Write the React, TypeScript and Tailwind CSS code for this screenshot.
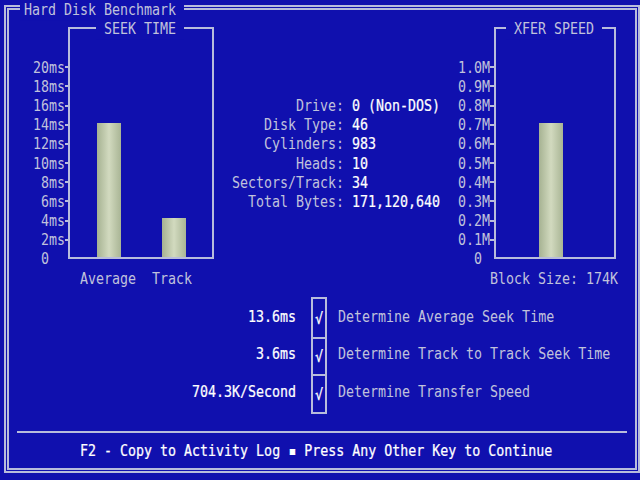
import React from 'react';

// Text-mode screen: 80 columns x 25 rows, 8px x 19.2px cells.
const LINE = 'border-[#b8bcdc]';
const BRIGHT = 'text-white [-webkit-text-stroke:0.2px_#ffffff]';

const seekTicks = ['20ms', '18ms', '16ms', '14ms', '12ms', '10ms', ' 8ms', ' 6ms', ' 4ms', ' 2ms'];
const xferTicks = ['1.0M', '0.9M', '0.8M', '0.7M', '0.6M', '0.5M', '0.4M', '0.3M', '0.2M', '0.1M'];

// pixels from the zero line up to the top tick
const AXIS_PX = 191;

const seekBars = [
  { label: 'Average', value: 14 },
  { label: 'Track', value: 4 },
];

const driveInfo = [
  ['Drive:', '0 (Non-DOS)'],
  ['Disk Type:', '46'],
  ['Cylinders:', '983'],
  ['Heads:', '10'],
  ['Sectors/Track:', '34'],
  ['Total Bytes:', '171,120,640'],
];

const results = [
  { value: '13.6ms', task: 'Determine Average Seek Time' },
  { value: '3.6ms', task: 'Determine Track to Track Seek Time' },
  { value: '704.3K/Second', task: 'Determine Transfer Speed' },
];

function Bar({ height }: { height: number }) {
  return (
    <div
      className="w-[24px] bg-gradient-to-r from-[#a6b292] via-[#d2dabf] to-[#a9b595]"
      style={{ height }}
    />
  );
}

function TickColumn({ ticks, zero }: { ticks: string[]; zero: string }) {
  return (
    <>
      {ticks.map((t) => (
        <div key={t} className="h-[19.2px] flex items-center justify-end">
          <span className="whitespace-pre scale-y-[1.15]">{t}</span>
          <span className="w-[5px] h-[2px] bg-[#b8bcdc]" />
        </div>
      ))}
      <div className="h-[19.2px] flex items-center justify-end">
        <span className="whitespace-pre scale-y-[1.15]">{zero}</span>
        <span className="w-[5px] h-[2px]" />
      </div>
    </>
  );
}

export default function App() {
  return (
    <div className="w-[640px] h-[480px] overflow-hidden bg-[#1010ae] text-[#c0c2dc] font-['DejaVu_Sans_Mono','Liberation_Mono',monospace] text-[13.3px] leading-[19.2px] grid grid-cols-[repeat(80,8px)] grid-rows-[repeat(25,19.2px)]">
      {/* outer double frame */}
      <div className={`col-start-1 col-span-80 row-start-1 row-span-25 ml-[4px] mt-[5px] mb-[7px] border-[5px] border-double ${LINE}`} />
      <div className="col-start-3 col-span-21 row-start-1 ml-[4px] pl-[4px] bg-[#1010ae] whitespace-pre scale-y-[1.15]">
        Hard Disk Benchmark
      </div>

      {/* seek time chart */}
      <div className="col-start-1 col-span-9 row-start-4 row-span-11 mr-[2px] flex flex-col">
        <TickColumn ticks={seekTicks} zero={' 0  '} />
      </div>
      <div className={`col-start-9 col-span-19 row-start-2 row-span-13 ml-[4px] mr-[2px] mt-[8px] mb-[10px] border-2 ${LINE} flex items-end pl-[27px] gap-[41px]`}>
        {seekBars.map((b) => (
          <Bar key={b.label} height={(b.value / 20) * AXIS_PX} />
        ))}
      </div>
      <div className="col-start-13 col-span-11 row-start-2 bg-[#1010ae] text-center scale-y-[1.15]">SEEK TIME</div>
      <div className="col-start-11 col-span-7 row-start-15 scale-y-[1.15]">Average</div>
      <div className="col-start-20 col-span-5 row-start-15 scale-y-[1.15]">Track</div>

      {/* drive parameters */}
      <div className="col-start-28 col-span-30 row-start-6 row-span-6 grid grid-cols-[128px_1fr] gap-x-[8px] auto-rows-[19.2px]">
        {driveInfo.map(([k, v]) => (
          <React.Fragment key={k}>
            <div className="text-right whitespace-pre scale-y-[1.15]">{k}</div>
            <div className={`whitespace-pre scale-y-[1.15] ${BRIGHT}`}>{v}</div>
          </React.Fragment>
        ))}
      </div>

      {/* transfer speed chart */}
      <div className="col-start-56 col-span-7 row-start-4 row-span-11 mr-[1px] flex flex-col">
        <TickColumn ticks={xferTicks} zero={'  0 '} />
      </div>
      <div className={`col-start-62 col-span-16 row-start-2 row-span-13 ml-[6px] mt-[8px] mb-[10px] border-2 ${LINE} flex items-end pl-[43px]`}>
        <Bar height={0.7 * AXIS_PX} />
      </div>
      <div className="col-start-64 col-span-12 row-start-2 bg-[#1010ae] text-center translate-x-[2px] scale-y-[1.15]">XFER SPEED</div>
      <div className="col-start-62 col-span-17 row-start-15 ml-[2px] whitespace-pre scale-y-[1.15]">Block Size: 174K</div>

      {/* test results */}
      <div className="col-start-21 col-span-58 row-start-16 row-span-7 pt-[9.6px] flex">
        <div className="w-[136px] flex flex-col">
          {results.map((r) => (
            <div key={r.task} className={`h-[37.5px] flex items-center justify-end ${BRIGHT}`}>
              <span className="scale-y-[1.15]">{r.value}</span>
            </div>
          ))}
        </div>
        <div className={`ml-[15px] w-[16px] self-start border-2 ${LINE} flex flex-col`}>
          {results.map((r, i) => (
            <div
              key={r.task}
              className={`h-[37.5px] flex items-center justify-center ${BRIGHT} ${i > 0 ? `border-t-2 ${LINE}` : ''}`}
            >
              <span className="scale-y-[1.15]">√</span>
            </div>
          ))}
        </div>
        <div className="ml-[11px] flex flex-col">
          {results.map((r) => (
            <div key={r.task} className="h-[37.5px] flex items-center">
              <span className="whitespace-pre scale-y-[1.15]">{r.task}</span>
            </div>
          ))}
        </div>
      </div>

      {/* footer */}
      <div className="col-start-1 col-span-80 row-start-23 self-center ml-[17px] mr-[13px] h-[2px] bg-[#b8bcdc]" />
      <div className={`col-start-11 col-span-60 row-start-24 whitespace-pre scale-y-[1.15] ${BRIGHT}`}>
        F2 - Copy to Activity Log ▪ Press Any Other Key to Continue
      </div>
    </div>
  );
}
